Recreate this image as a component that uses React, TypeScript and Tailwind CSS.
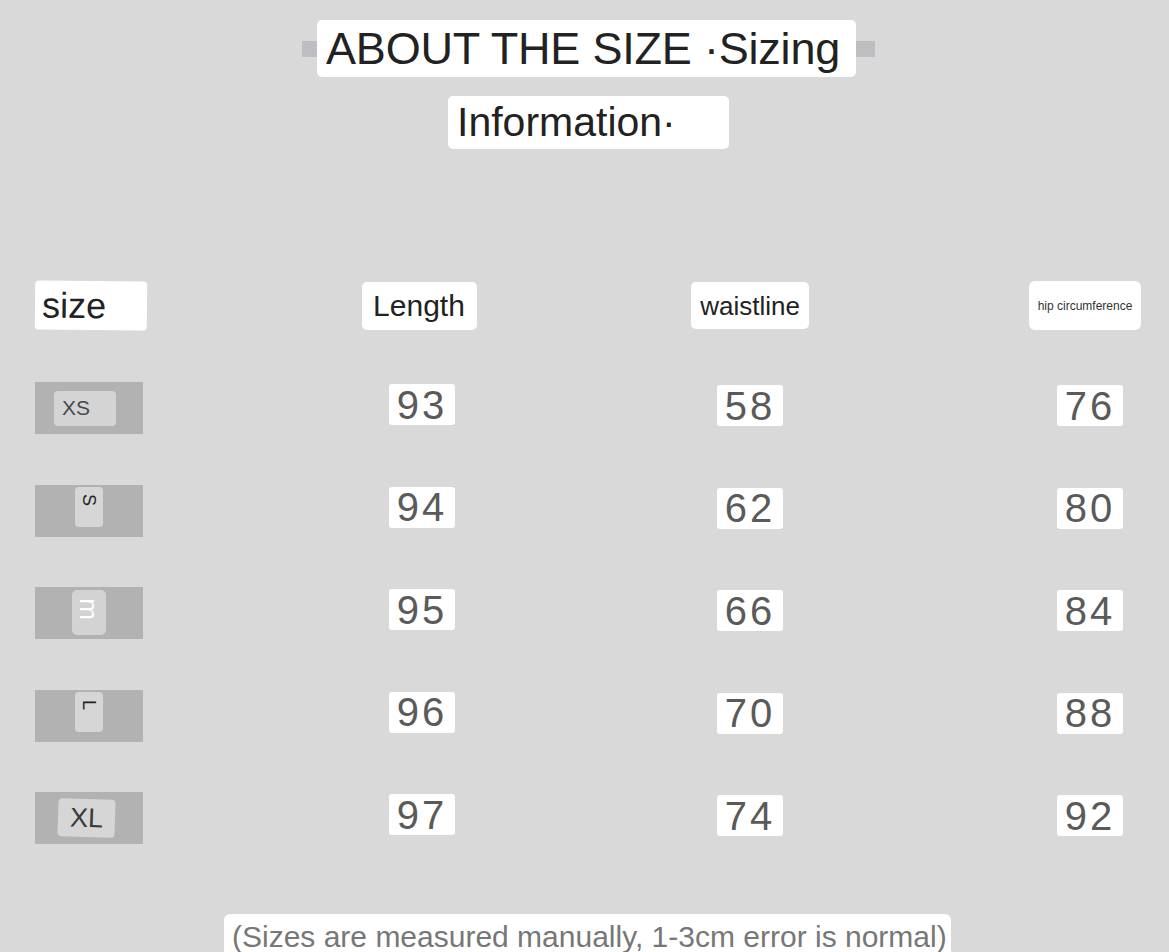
import React from "react";

const font = { fontFamily: '"Liberation Sans", Arial, sans-serif' };

type Row = { size: string; kind: "xs" | "rot" | "rotw" | "xl"; len: string; waist: string; hip: string };

const rows: Row[] = [
  { size: "XS", kind: "xs", len: "93", waist: "58", hip: "76" },
  { size: "S", kind: "rot", len: "94", waist: "62", hip: "80" },
  { size: "m", kind: "rotw", len: "95", waist: "66", hip: "84" },
  { size: "L", kind: "rot", len: "96", waist: "70", hip: "88" },
  { size: "XL", kind: "xl", len: "97", waist: "74", hip: "92" },
];

function SizeCell({ r }: { r: Row }) {
  if (r.kind === "xs") {
    return (
      <div className="w-[108px] h-[52px] bg-[#b2b2b2] flex items-center pl-[19px]">
        <div className="w-[62px] h-[35px] rounded-[4px] bg-[#d4d4d4] flex items-center pl-[8px] text-[21px] text-[#4a4a4a]">
          XS
        </div>
      </div>
    );
  }
  if (r.kind === "xl") {
    return (
      <div className="w-[108px] h-[52px] bg-[#b2b2b2] flex items-center pl-[23px]">
        <div className="w-[57px] h-[38px] rounded-[4px] bg-[#d6d6d6] flex items-center justify-center text-[27px] text-[#3a3a3a] rotate-[2deg]">
          XL
        </div>
      </div>
    );
  }
  const white = r.kind === "rotw";
  return (
    <div className="w-[108px] h-[52px] bg-[#b2b2b2] flex items-start justify-center">
      <div
        className={
          white
            ? "mt-[3px] w-[34px] h-[45px] rounded-[5px] bg-[#d3d3d3] flex items-center justify-center"
            : "mt-[2px] w-[28px] h-[40px] rounded-[4px] bg-[#d6d6d6] flex items-start justify-center pt-[4px]"
        }
      >
        <span
          className={
            white
              ? "block rotate-90 text-[26px] leading-none text-white mb-[8px]"
              : "block rotate-90 text-[18px] leading-none text-[#222]"
          }
        >
          {r.size}
        </span>
      </div>
    </div>
  );
}

function Num({ v }: { v: string }) {
  return (
    <div className="h-[41px] px-[8px] bg-white rounded-[3px] flex items-center justify-center text-[40px] leading-none text-[#5a5a5a] tracking-[3px]">
      {v}
    </div>
  );
}

export default function App() {
  return (
    <div className="w-[1169px] h-[952px] bg-[#d9d9d9] overflow-hidden flex flex-col" style={font}>
      <div className="flex flex-col items-center pt-[20px]">
        <div className="flex items-center ml-[8px]">
          <div className="w-[15px] h-[16px] bg-[#bdbdc2]" />
          <div className="h-[57px] w-[539px] bg-white rounded-[5px] flex items-center pl-[9px] text-[45px] text-[#222] leading-none tracking-[-0.2px]">
            ABOUT THE SIZE ·Sizing
          </div>
          <div className="w-[19px] h-[16px] bg-[#bdbdc2]" />
        </div>
        <div className="ml-[8px] mt-[19px] h-[53px] w-[281px] bg-white rounded-[5px] flex items-center pl-[9px] text-[41px] text-[#222] leading-none">
          Information·
        </div>
      </div>

      <div className="mt-[132px] flex items-center h-[50px]">
        <div className="ml-[35px] w-[112px] h-[49px] bg-white rounded-[4px] flex items-center pl-[7px] text-[36px] text-[#222] leading-none rotate-[0.5deg]">
          size
        </div>
        <div className="ml-[175px] w-[200px] flex justify-center pr-[6px]">
          <div className="w-[115px] h-[48px] bg-white rounded-[5px] flex items-center justify-center text-[30px] text-[#222] leading-none">
            Length
          </div>
        </div>
        <div className="ml-[128px] w-[200px] flex justify-center">
          <div className="w-[118px] h-[47px] bg-white rounded-[5px] flex items-center justify-center text-[26px] text-[#222] leading-none">
            waistline
          </div>
        </div>
        <div className="ml-[160px] w-[150px] flex justify-center">
          <div className="w-[112px] h-[49px] bg-white rounded-[6px] flex items-center justify-center text-[12px] text-[#333] leading-none">
            hip circumference
          </div>
        </div>
      </div>

      <div className="mt-[52px] flex flex-col gap-[50.5px]">
        {rows.map((r) => (
          <div key={r.size} className="flex items-start h-[52px]">
            <div className="ml-[35px] w-[112px]">
              <SizeCell r={r} />
            </div>
            <div className="ml-[175px] w-[200px] flex justify-center pt-[2px]">
              <Num v={r.len} />
            </div>
            <div className="ml-[128px] w-[200px] flex justify-center pt-[3px]">
              <Num v={r.waist} />
            </div>
            <div className="ml-[160px] w-[150px] flex justify-center pt-[3px] pl-[10px]">
              <Num v={r.hip} />
            </div>
          </div>
        ))}
      </div>

      <div className="mt-[70px] flex justify-center">
        <div className="ml-[6px] w-[727px] h-[50px] bg-white rounded-t-[6px] pl-[8px] pt-[8px] text-[30px] text-[#777] leading-none">
          (Sizes are measured manually, 1-3cm error is normal)
        </div>
      </div>
    </div>
  );
}
